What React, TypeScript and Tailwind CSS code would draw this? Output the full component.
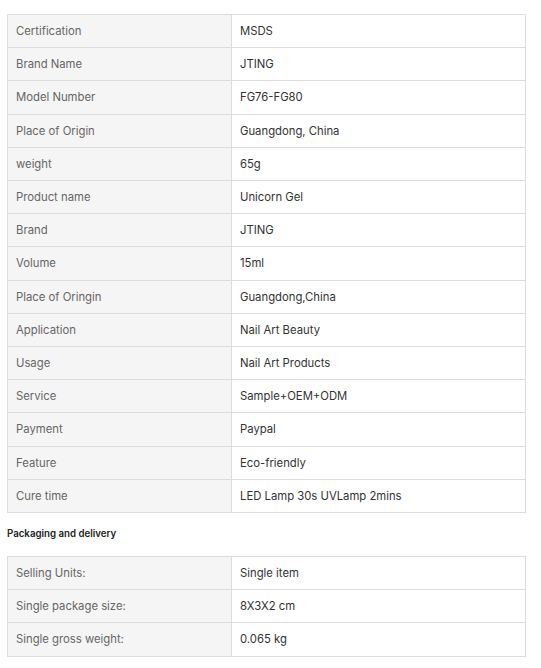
const attributes: [string, string][] = [
  ['Certification', 'MSDS'],
  ['Brand Name', 'JTING'],
  ['Model Number', 'FG76-FG80'],
  ['Place of Origin', 'Guangdong, China'],
  ['weight', '65g'],
  ['Product name', 'Unicorn Gel'],
  ['Brand', 'JTING'],
  ['Volume', '15ml'],
  ['Place of Oringin', 'Guangdong,China'],
  ['Application', 'Nail Art Beauty'],
  ['Usage', 'Nail Art Products'],
  ['Service', 'Sample+OEM+ODM'],
  ['Payment', 'Paypal'],
  ['Feature', 'Eco-friendly'],
  ['Cure time', 'LED Lamp 30s UVLamp 2mins'],
]

const packaging: [string, string][] = [
  ['Selling Units:', 'Single item'],
  ['Single package size:', '8X3X2 cm'],
  ['Single gross weight:', '0.065 kg'],
]

function SpecTable({ rows }: { rows: [string, string][] }) {
  return (
    <table className="w-[519px] border-collapse table-fixed text-[11.3px] leading-[16.2px]">
      <colgroup>
        <col className="w-[224px]" />
        <col />
      </colgroup>
      <tbody>
        {rows.map(([label, value]) => (
          <tr key={label}>
            <td className="border border-[#dddddd] bg-[#f5f5f5] px-2 py-2 text-[#666666]">{label}</td>
            <td className="border border-[#dddddd] bg-white px-2 py-2 text-[#333333]">{value}</td>
          </tr>
        ))}
      </tbody>
    </table>
  )
}

export default function App() {
  return (
    <main className="min-h-screen bg-white pl-[7px] pt-[14px] font-['Inter','Liberation_Sans',sans-serif]">
      <SpecTable rows={attributes} />
      <h3 className="mt-[14px] mb-[15px] text-[9.7px] font-semibold leading-[14px] text-[#222222]">
        Packaging and delivery
      </h3>
      <SpecTable rows={packaging} />
    </main>
  )
}
